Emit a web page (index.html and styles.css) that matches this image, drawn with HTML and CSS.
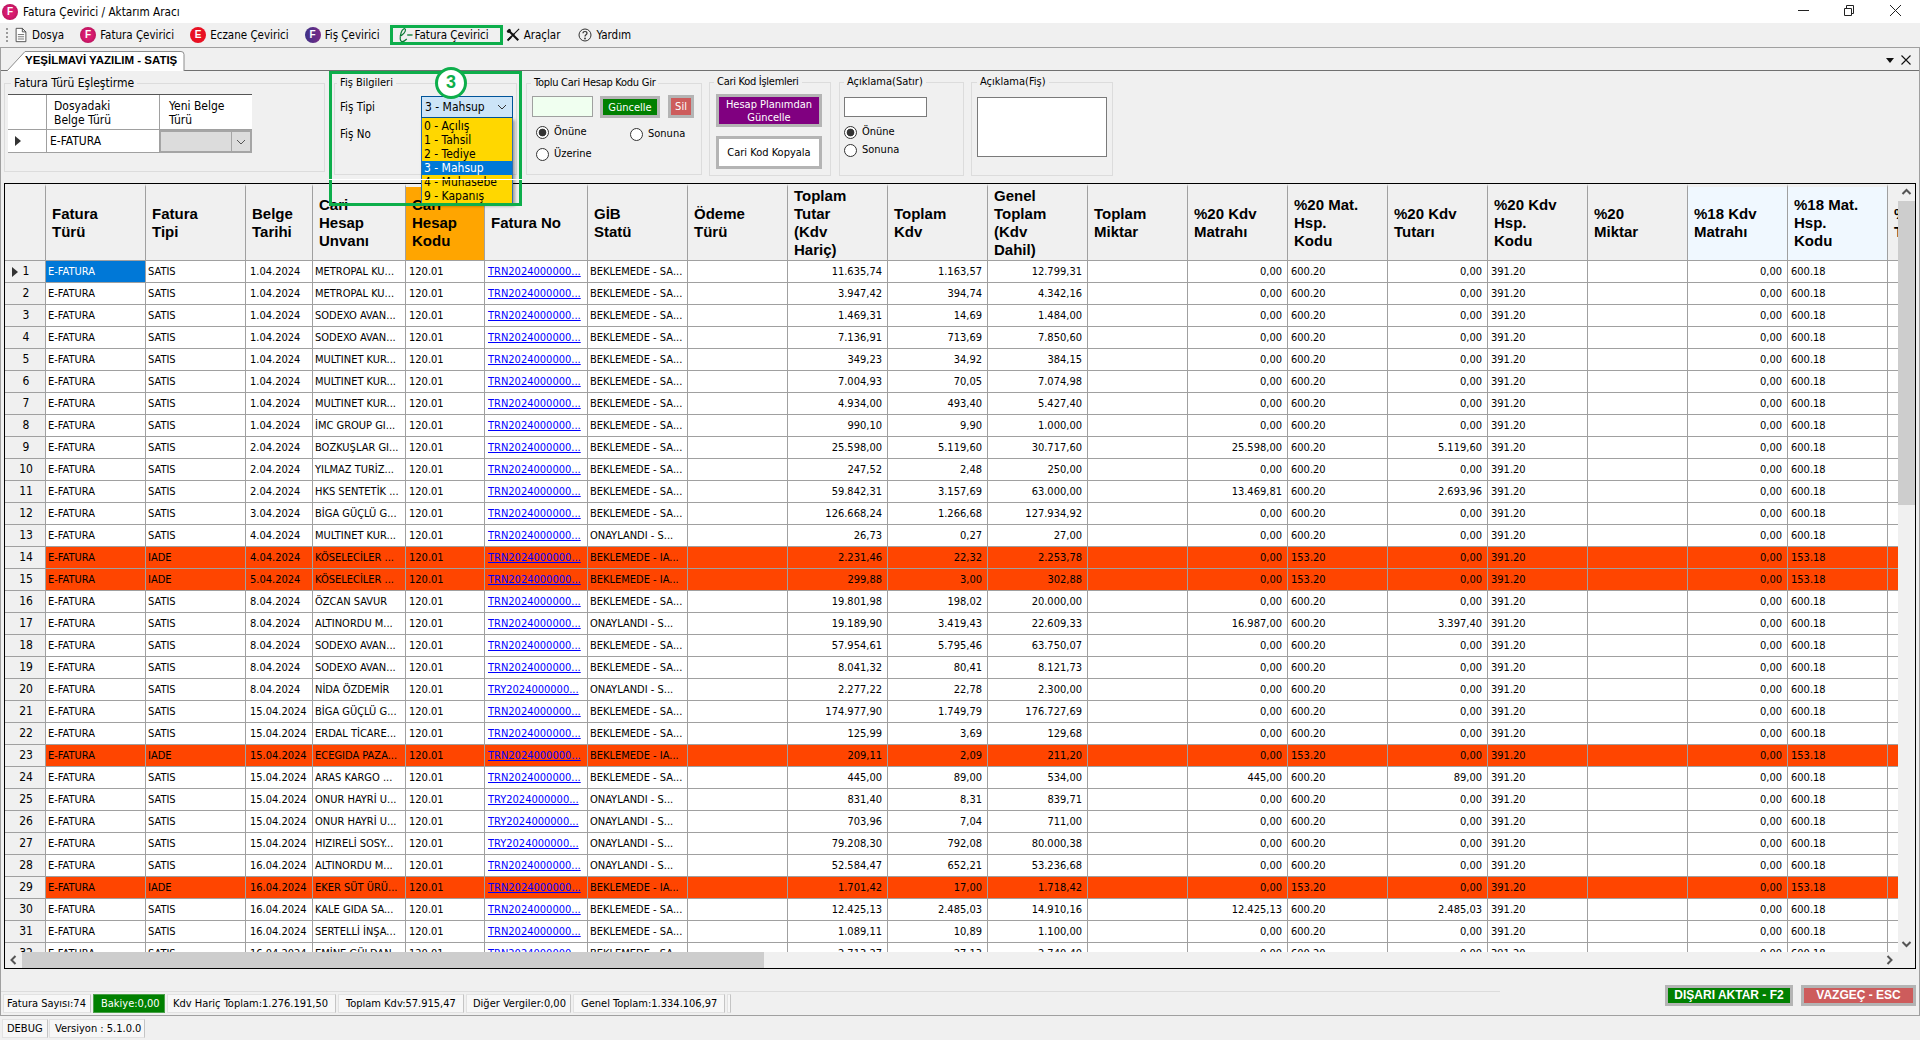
FILE: index.html
```html
<!DOCTYPE html>
<html lang="tr">
<head>
<meta charset="utf-8">
<title>Fatura Çevirici / Aktarım Aracı</title>
<link rel="stylesheet" href="styles.css">
</head>
<body>
<div class="app">
  <header class="titlebar">
    <span class="badge badge-f badge-title">F</span>
    <span class="title-text">Fatura Çevirici / Aktarım Aracı</span>
    <div class="winbtns">
      <svg class="winbtn" viewBox="0 0 46 23"><path d="M18 10.5h11" stroke="#222" fill="none"/></svg>
      <svg class="winbtn" viewBox="0 0 46 23"><path d="M18.5 8.5h7v7h-7zM20.5 8V5.5h7v8H26" stroke="#222" fill="none"/></svg>
      <svg class="winbtn" viewBox="0 0 46 23"><path d="M18 5l11 11M29 5L18 16" stroke="#222" fill="none"/></svg>
    </div>
  </header>

  <nav class="menubar">
    <span class="grip"></span>
    <a class="menu-item menu-first">
      <svg class="micon" viewBox="0 0 14 18"><path d="M1.5 1.5h7l4 4v11h-11zM8.5 1.5v4h4" fill="#fff" stroke="#444"/><path d="M3.5 8.5h7M3.5 11h7M3.5 13.500h7" stroke="#666" fill="none"/></svg>
      Dosya
    </a>
    <a class="menu-item"><span class="badge badge-f">F</span>Fatura Çevirici</a>
    <a class="menu-item"><span class="badge badge-e">E</span>Eczane Çevirici</a>
    <a class="menu-item"><span class="badge badge-p">F</span>Fiş Çevirici</a>
    <a class="menu-item menu-active">
      <svg class="eicon" viewBox="0 0 18 18"><path d="M3 10.500C7 9 10 5 9.500 2.800C9 .8 6 2 4.600 6.500C3.300 11 2.800 16.500 6 16.500C8 16.500 9.500 15 11 13.500" fill="none" stroke="#0b7a35" stroke-width="1.300"/><path d="M11.500 9h6" stroke="#0b7a35" stroke-width="1.500"/></svg>
      Fatura Çevirici
    </a>
    <a class="menu-item menu-tools">
      <svg class="micon" viewBox="0 0 16 16"><path d="M3.500 3.500L14 14" stroke="#111" stroke-width="2.400"/><path d="M.8 3.400L3.400.8l1.700.6.600 2-2.300 2.300-2-.6z" fill="#111"/><path d="M15 1L9 7" stroke="#111" stroke-width="1.300"/><path d="M9.500 6.500L3 13" stroke="#111" stroke-width="1.800"/><path d="M5 9.500L1 13.500l1.500 1.500 4-4z" fill="#111"/></svg>
      Araçlar
    </a>
    <a class="menu-item menu-help">
      <svg class="micon" viewBox="0 0 14 14"><circle cx="7" cy="7" r="6" fill="none" stroke="#333"/><path d="M5 5.300C5 2.900 9 2.900 9 5.300C9 6.900 7 6.800 7 8.500" fill="none" stroke="#333" stroke-width="1.200"/><circle cx="7" cy="10.500" r=".9" fill="#333"/></svg>
      Yardım
    </a>
  </nav>

  <main class="panel">
    <div class="tabstrip">
      <div class="tab">
        <svg class="tab-shape" viewBox="0 0 178 20" preserveAspectRatio="none"><path d="M0 20L18 .5H174Q177 .5 177 3.500V20" fill="#fff" stroke="#8c8c8c"/></svg>
        <span class="tab-label">YEŞİLMAVİ YAZILIM - SATIŞ</span>
      </div>
      <div class="tab-tools">
        <span class="tab-arrow"></span>
        <svg class="tab-close" viewBox="0 0 10 10"><path d="M.5.5l9 9M9.500.5l-9 9" stroke="#111" stroke-width="1.100" fill="none"/></svg>
      </div>
    </div>

    <section class="toparea">
      <fieldset class="group g-map">
        <legend>Fatura Türü Eşleştirme</legend>
        <div class="mini">
          <div class="mini-cell mini-rh"></div>
          <div class="mini-cell mini-h mini-c1">Dosyadaki<br>Belge Türü</div>
          <div class="mini-cell mini-h mini-c2">Yeni Belge<br>Türü</div>
          <div class="mini-cell mini-rh mini-row"><span class="tri"></span></div>
          <div class="mini-cell mini-row mini-c1 mini-val">E-FATURA</div>
          <div class="mini-cell mini-row mini-combo">
            <span class="mini-combo-box"></span>
            <svg class="chev" viewBox="0 0 10 6"><path d="M1 1l4 4 4-4" fill="none" stroke="#555"/></svg>
          </div>
        </div>
      </fieldset>

      <fieldset class="group g-fis">
        <legend>Fiş Bilgileri</legend>
        <div class="form-grid">
          <label>Fiş Tipi</label>
          <div class="combo"><span>3 - Mahsup</span><svg class="chev" viewBox="0 0 10 6"><path d="M1 1l4 4 4-4" fill="none" stroke="#333"/></svg></div>
          <label>Fiş No</label>
          <input class="field field-no" type="text">
        </div>
      </fieldset>

      <fieldset class="group g-toplu">
        <legend>Toplu Cari Hesap Kodu Gir</legend>
        <div class="toplu-row">
          <input class="field field-mint" type="text">
          <button class="btn btn-green btn-guncelle">Güncelle</button>
          <button class="btn btn-red btn-sil">Sil</button>
        </div>
        <div class="radio-grid">
          <label class="radio-line"><input class="radio" type="radio" name="a" checked>Önüne</label>
          <label class="radio-line radio-low"><input class="radio" type="radio" name="a">Sonuna</label>
          <label class="radio-line"><input class="radio" type="radio" name="a">Üzerine</label>
        </div>
      </fieldset>

      <fieldset class="group g-cari group-high">
        <legend>Cari Kod İşlemleri</legend>
        <button class="btn btn-purple btn-tall">Hesap Planımdan<br>Güncelle</button>
        <button class="btn btn-white btn-tall">Cari Kod Kopyala</button>
      </fieldset>

      <fieldset class="group g-satir group-high">
        <legend>Açıklama(Satır)</legend>
        <input class="field field-satir" type="text">
        <div class="radio-stack">
          <label class="radio-line"><input class="radio" type="radio" name="b" checked>Önüne</label>
          <label class="radio-line"><input class="radio" type="radio" name="b">Sonuna</label>
        </div>
      </fieldset>

      <fieldset class="group g-fisnot group-high">
        <legend>Açıklama(Fiş)</legend>
        <textarea class="field field-note"></textarea>
      </fieldset>
    </section>

    <section class="grid">
      <div class="grid-main">
        <div class="table-wrap">
          <table class="data">
            <colgroup id="cols"></colgroup>
            <thead>
              <tr>
                <th></th>
                <th>Fatura<br>Türü</th>
                <th>Fatura<br>Tipi</th>
                <th>Belge<br>Tarihi</th>
                <th>Cari<br>Hesap<br>Unvanı</th>
                <th class="th-orange">Cari<br>Hesap<br>Kodu</th>
                <th>Fatura No</th>
                <th>GİB<br>Statü</th>
                <th>Ödeme<br>Türü</th>
                <th>Toplam<br>Tutar<br>(Kdv<br>Hariç)</th>
                <th>Toplam<br>Kdv</th>
                <th>Genel<br>Toplam<br>(Kdv<br>Dahil)</th>
                <th>Toplam<br>Miktar</th>
                <th>%20 Kdv<br>Matrahı</th>
                <th>%20 Mat.<br>Hsp.<br>Kodu</th>
                <th>%20 Kdv<br>Tutarı</th>
                <th>%20 Kdv<br>Hsp.<br>Kodu</th>
                <th>%20<br>Miktar</th>
                <th class="th-blue">%18 Kdv<br>Matrahı</th>
                <th class="th-blue">%18 Mat.<br>Hsp.<br>Kodu</th>
                <th>%18 Kdv<br>Tutarı</th>
              </tr>
            </thead>
            <tbody id="rows"></tbody>
          </table>
        </div>
        <div class="vscroll">
          <svg class="arrow" viewBox="0 0 17 17"><path d="M4.500 10l4-4 4 4" fill="none" stroke="#555" stroke-width="2"/></svg>
          <div class="vtrack"><div class="vthumb"></div></div>
          <svg class="arrow" viewBox="0 0 17 17"><path d="M4.500 7l4 4 4-4" fill="none" stroke="#555" stroke-width="2"/></svg>
        </div>
      </div>
      <div class="hscroll">
        <svg class="arrow" viewBox="0 0 17 16"><path d="M10.500 4l-4 4 4 4" fill="none" stroke="#555" stroke-width="2"/></svg>
        <div class="htrack"><div class="hthumb"></div></div>
        <svg class="arrow" viewBox="0 0 17 16"><path d="M6.500 4l4 4-4 4" fill="none" stroke="#555" stroke-width="2"/></svg>
      </div>
    </section>

    <footer class="footer">
      <div class="statusbar">
        <span class="st st-count">Fatura Sayısı:74</span>
        <span class="st st-green">Bakiye:0,00</span>
        <span class="st st-kdvh">Kdv Hariç Toplam:1.276.191,50</span>
        <span class="st st-kdv">Toplam Kdv:57.915,47</span>
        <span class="st st-diger">Diğer Vergiler:0,00</span>
        <span class="st st-genel">Genel Toplam:1.334.106,97</span>
        <span class="st st-empty"></span>
      </div>
      <div class="actions">
        <button class="btn btn-action btn-green btn-export">DIŞARI AKTAR - F2</button>
        <button class="btn btn-action btn-red btn-cancel">VAZGEÇ - ESC</button>
      </div>
    </footer>
  </main>

  <div class="bottombar">
    <span class="st st-debug">DEBUG</span>
    <span class="st st-version">Versiyon : 5.1.0.0</span>
  </div>

  <div class="dropdown">
    <div class="dd-item">0 - Açılış</div>
    <div class="dd-item">1 - Tahsil</div>
    <div class="dd-item">2 - Tediye</div>
    <div class="dd-item dd-selected">3 - Mahsup</div>
    <div class="dd-item">4 - Muhasebe</div>
    <div class="dd-item">9 - Kapanış</div>
  </div>
  <div class="callout">
    <span class="callout-num">3</span>
  </div>
</div>
<script src="app.js"></script>
</body>
</html>
```
FILE: styles.css
```css
* { box-sizing: border-box; }
html, body { margin: 0; height: 100%; }
body {
  width: 1920px; height: 1040px; overflow: hidden;
  background: #f0f0f0; color: #000;
  font-family: "DejaVu Sans Condensed", "DejaVu Sans", sans-serif;
  font-stretch: condensed; font-size: 11px; line-height: 14px;
}
.app { position: relative; width: 1920px; height: 1040px; display: flex; flex-direction: column; }

/* title bar */
.titlebar { height: 23px; background: #fff; display: flex; align-items: center; padding-left: 2px; flex: none; }
.title-text { margin-left: 5px; font-size: 11.700px; }
.winbtns { margin-left: auto; display: flex; margin-right: 2px; }
.winbtn { width: 46px; height: 23px; display: block; }

.badge {
  width: 16px; height: 16px; border-radius: 50%; color: #fff;
  font: bold 10px/16px "Liberation Sans", sans-serif; text-align: center; flex: none;
}
.badge-f { background: radial-gradient(circle at 50% 50%, #d81b70 40%, #a5104f 100%); }
.badge-e { background: #e81123; }
.badge-p { background: linear-gradient(90deg, #3d3287, #7a2a86); }

/* menu */
.menubar { height: 24px; flex: none; display: flex; align-items: center; padding-left: 6px; font-size: 11.500px; }
.grip { width: 2px; height: 14px; background: repeating-linear-gradient(#9a9a9a 0 2px, transparent 2px 4px); }
.menu-item { display: flex; align-items: center; gap: 4px; margin-left: 16px; white-space: nowrap; }
.menu-first { margin-left: 6px; }
.micon { width: 14px; height: 16px; flex: none; }
.eicon { width: 18px; height: 16px; flex: none; }
.menu-active { border: 3px solid #0dae4b; height: 20px; padding: 0 11px 0 3px; margin-left: 10px; gap: 1px; }
.menu-tools { margin-left: 3px; }
.menu-help { margin-left: 18px; }

/* panel */
.panel { height: 969px; flex: none; border: 1px solid #a0a0a0; display: flex; flex-direction: column; }
.tabstrip { height: 23px; flex: none; border-bottom: 1px solid #707070; display: flex; align-items: flex-end; padding-left: 6px; }
.tab { position: relative; width: 178px; height: 20px; margin-bottom: -1px; }
.tab-shape { position: absolute; inset: 0; width: 100%; height: 100%; }
.tab-label {
  position: relative; display: block; padding-left: 18px; line-height: 19px;
  font: bold 11.500px/19px "Liberation Sans", sans-serif; white-space: nowrap;
}
.tab-tools { margin-left: auto; display: flex; align-items: center; gap: 7px; padding: 0 8px 5px 0; }
.tab-arrow { width: 0; height: 0; border: 4px solid transparent; border-top: 5px solid #111; border-bottom: 0; }
.tab-close { width: 10px; height: 10px; }

/* top forms */
.toparea { height: 112px; flex: none; display: flex; align-items: flex-start; padding: 5px 0 0 3px; }
.group { margin: 0; border: 1px solid #dcdcdc; min-width: 0; flex: none; }
.group legend { padding: 0 3px; font-size: 11px; line-height: 14px; white-space: nowrap; }
.group-high { margin-top: -1px; height: 101px; }
.g-map { width: 321px; height: 96px; padding: 4px 0 0 3px; }
.g-map legend { margin-left: 3px; font-size: 12px; }
.g-fis { width: 183px; height: 99px; margin-left: 9px; padding: 6px 0 0 5px; }
.g-fis legend { margin-left: -3px; }
.g-toplu { width: 176px; height: 99px; margin-left: 9px; padding: 6px 0 0 5px; }
.g-toplu legend { margin-left: -1px; letter-spacing: -.26px; }
.g-cari { width: 122px; margin-left: 7px; padding: 5px 0 0 6px; display: flex; flex-direction: column; }
.g-cari legend { margin-left: -2px; letter-spacing: -.28px; }
.g-satir { width: 125px; margin-left: 8px; padding: 8px 0 0 4px; }
.g-fisnot { width: 142px; margin-left: 7px; padding: 8px 0 0 5px; }

.mini {
  display: grid; grid-template-columns: 39px 113px 92px; grid-template-rows: 35px 23px;
  width: 244px; border-top: 1px solid #555;
}
.mini-cell { background: #fff; line-height: 14px; }
.mini-rh { border-right: 1px solid #a0a0a0; border-bottom: 1px solid #a0a0a0; display: flex; align-items: center; }
.mini-h { padding: 4px 0 0 7px; border-bottom: 1px solid #a0a0a0; font-size: 12px; }
.mini-c1 { border-right: 1px solid #a0a0a0; }
.mini-c2 { padding-left: 9px; }
.mini-row { border-bottom: 1px solid #a0a0a0; }
.mini-val { padding: 4px 0 0 3px; font-size: 12px; }
.mini-combo { display: flex; align-items: center; background: #dcdcdc; border: 2px solid #a5a5a5; border-left-width: 1px; }
.mini-combo-box { flex: 1; height: 100%; border-right: 1px solid #a5a5a5; }
.mini-combo .chev { margin: 0 4px; }
.tri { width: 0; height: 0; margin-left: 7px; border: 5px solid transparent; border-left: 6px solid #333; border-right: 0; }

.form-grid { display: grid; grid-template-columns: 81px 92px; grid-auto-rows: 22px; row-gap: 5px; align-items: center; font-size: 11.500px; }
.combo {
  height: 22px; display: flex; align-items: center; justify-content: space-between;
  padding: 0 5px 0 3px; background: #cce4f7; border: 1px solid #005499; font-size: 12px;
}
.chev { width: 10px; height: 6px; flex: none; }
.field { display: block; margin: 0; padding: 0; background: #fff; border: 1px solid #7a7a7a; border-radius: 0; resize: none; }
.field-no { width: 92px; height: 22px; visibility: hidden; }
.field-mint { width: 61px; height: 21px; background: #f0fff0; border-color: #a0a0a0; }
.field-satir { width: 83px; height: 20px; }
.field-note { width: 130px; height: 60px; }

.toplu-row { display: flex; align-items: flex-start; }
.btn {
  display: block; margin: 0; padding: 0; border: 3px solid #b4b4b4; color: #fff; text-align: center;
  font-family: "DejaVu Sans Condensed", "DejaVu Sans", sans-serif; font-stretch: condensed;
  font-size: 11px; line-height: 13px; border-radius: 0; white-space: nowrap;
}
.btn-green { background: #008000; }
.btn-red { background: #cd5c5c; }
.btn-purple { background: #800080; }
.btn-white { background: #fff; color: #000; }
.btn-guncelle { width: 60px; height: 22px; margin-left: 7px; }
.btn-sil { width: 26px; height: 23px; margin: -1px 0 0 8px; }
.btn-tall { width: 106px; height: 33px; }
.btn-white { margin-top: 9px; }

.radio-grid { display: grid; grid-template-columns: 94px auto; row-gap: 8px; margin-top: 7px; padding-left: 4px; }
.radio-stack { display: flex; flex-direction: column; gap: 4px; margin-top: 8px; }
.radio-line { display: flex; align-items: center; gap: 5px; height: 14px; }
.radio-low { position: relative; top: 2px; }
.radio {
  appearance: none; width: 13px; height: 13px; margin: 0; flex: none;
  border: 1px solid #333; border-radius: 50%; background: #fff;
}
.radio:checked { background: radial-gradient(circle, #333 0 3.500px, #fff 4.200px); }

/* data grid */
.grid { height: 786px; margin: 0 3px; border: 1px solid #000; display: flex; flex-direction: column; flex: none; }
.grid-main { flex: 1; min-height: 0; display: flex; }
.table-wrap { flex: 1; min-width: 0; overflow: hidden; background: #fff; }
.data { table-layout: fixed; width: 1960px; border-collapse: separate; border-spacing: 0; }
.col { width: 100px; }
.col-head { width: 41px; }
.col-date { width: 67px; }
.col-name { width: 93px; }
.col-code { width: 79px; }
.col-no { width: 103px; }
.data th {
  height: 77px; padding: 0 0 1px 6px; text-align: left; vertical-align: middle;
  background: #f0f0f0; background-clip: padding-box;
  border-top: 3px solid #f0f0f0; border-right: 1px solid #a0a0a0; border-bottom: 1px solid #a0a0a0;
  font: bold 15px/18px "Liberation Sans", sans-serif;
  white-space: nowrap; overflow: hidden;
}
.data .th-orange { background-color: #ffa500; }
.data .th-blue { background-color: #f0f8ff; }
.data td {
  height: 22px; padding: 0 3px 0 2px; line-height: 21px; white-space: nowrap; overflow: hidden;
  border-right: 1px solid #a0a0a0; border-bottom: 1px solid #a0a0a0;
}
.data td.rh { position: relative; background: #f0f0f0; text-align: center; padding-left: 5px; font-size: 12px; }
.data td.rh .tri { position: absolute; left: 0; top: 6px; }
.data td.num { text-align: right; padding-right: 5px; }
.data td.pad { padding-left: 3px; }
.data td.date { padding-left: 4px; }
.data a { color: #00f; text-decoration: underline; }
.data tr.iade td:not(.rh) { background: #ff4500; }
.data td.sel { background: #0078d7; color: #fff; }

.vscroll { width: 17px; flex: none; display: flex; flex-direction: column; }
.arrow { display: block; width: 17px; height: 17px; flex: none; }
.vtrack { flex: 1; }
.vthumb { height: 304px; background: #cdcdcd; }
.hscroll { height: 16px; flex: none; display: flex; padding-right: 17px; }
.hscroll .arrow { height: 16px; }
.htrack { flex: 1; padding-right: 1117px; }
.hthumb { height: 100%; background: #cdcdcd; }

/* footer */
.footer { flex: 1; display: flex; justify-content: space-between; align-items: flex-start; }
.statusbar {
  width: 1499px; margin-top: 22px; padding: 2px 0 0 2px; height: 22px;
  border-top: 1px solid #dcdcdc; display: flex; gap: 2px;
}
.st {
  display: block; height: 19px; line-height: 17px; padding: 0 0 0 5px; white-space: nowrap;
  background: #f7f7f7; border: 1px solid #e2e2e2; border-right-color: #c4c4c4;
}
.st-count { width: 88px; padding-left: 3px; }
.st-green { width: 72px; padding-left: 7px; background: #008000; color: #fff; border-color: #4aa04a; }
.st-kdvh { width: 169px; }
.st-kdv { width: 126px; padding-left: 7px; }
.st-diger { width: 105px; padding-left: 6px; }
.st-genel { width: 152px; padding-left: 7px; }
.st-empty { width: 4px; padding: 0; }
.actions { display: flex; gap: 8px; margin: 16px 3px 0 0; }
.btn-action { height: 21px; font: bold 12px/15px "Liberation Sans", sans-serif; }
.btn-export { width: 128px; }
.btn-cancel { width: 115px; }

.bottombar { flex: 1; display: flex; align-items: center; padding: 0 0 0 2px; gap: 1px; }
.st-debug { width: 46px; padding-left: 4px; }
.st-version { width: 96px; }

/* overlays */
.dropdown {
  position: absolute; left: 421px; top: 118px; width: 92px; height: 86px; padding-top: 1px;
  background: #ffd700; border: 1px solid #2f6fb0; border-top: 0; box-shadow: 2px 2px 3px rgba(0,0,0,.35);
  font-size: 12px;
}
.dd-item { height: 14px; line-height: 14px; padding-left: 2px; }
.dd-selected { background: #0078d7; color: #fff; }
.callout { position: absolute; left: 329px; top: 71px; width: 193px; height: 135px; border: 3px solid #0dae4b; }
.callout::after { content: ""; position: absolute; left: -3px; right: -3px; top: 105px; height: 1px; background: #fff; }
.callout-num {
  position: absolute; left: 103px; top: -7px; width: 32px; height: 32px; border-radius: 50%;
  background: #fff; border: 3.500px solid #0dae4b; color: #0dae4b; text-align: center;
  font: bold 18px/25px "Liberation Sans", sans-serif;
}
```
FILE: app.js
```js
var S = "BEKLEMEDE - SA...", O = "ONAYLANDI - S...", I = "BEKLEMEDE - IA...";
var data = [
  ["1.04.2024","METROPAL KU...","TRN",S,"11.635,74","1.163,57","12.799,31"],
  ["1.04.2024","METROPAL KU...","TRN",S,"3.947,42","394,74","4.342,16"],
  ["1.04.2024","SODEXO AVAN...","TRN",S,"1.469,31","14,69","1.484,00"],
  ["1.04.2024","SODEXO AVAN...","TRN",S,"7.136,91","713,69","7.850,60"],
  ["1.04.2024","MULTINET KUR...","TRN",S,"349,23","34,92","384,15"],
  ["1.04.2024","MULTINET KUR...","TRN",S,"7.004,93","70,05","7.074,98"],
  ["1.04.2024","MULTINET KUR...","TRN",S,"4.934,00","493,40","5.427,40"],
  ["1.04.2024","İMC GROUP GI...","TRN",S,"990,10","9,90","1.000,00"],
  ["2.04.2024","BOZKUŞLAR GI...","TRN",S,"25.598,00","5.119,60","30.717,60","25.598,00","5.119,60"],
  ["2.04.2024","YILMAZ TURİZ...","TRN",S,"247,52","2,48","250,00"],
  ["2.04.2024","HKS SENTETİK ...","TRN",S,"59.842,31","3.157,69","63.000,00","13.469,81","2.693,96"],
  ["3.04.2024","BİGA GÜÇLÜ G...","TRN",S,"126.668,24","1.266,68","127.934,92"],
  ["4.04.2024","MULTINET KUR...","TRN",O,"26,73","0,27","27,00"],
  ["4.04.2024","KÖSELECİLER ...","TRN",I,"2.231,46","22,32","2.253,78"],
  ["5.04.2024","KÖSELECİLER ...","TRN",I,"299,88","3,00","302,88"],
  ["8.04.2024","ÖZCAN SAVUR","TRN",S,"19.801,98","198,02","20.000,00"],
  ["8.04.2024","ALTINORDU M...","TRN",O,"19.189,90","3.419,43","22.609,33","16.987,00","3.397,40"],
  ["8.04.2024","SODEXO AVAN...","TRN",S,"57.954,61","5.795,46","63.750,07"],
  ["8.04.2024","SODEXO AVAN...","TRN",S,"8.041,32","80,41","8.121,73"],
  ["8.04.2024","NİDA ÖZDEMİR","TRY",O,"2.277,22","22,78","2.300,00"],
  ["15.04.2024","BİGA GÜÇLÜ G...","TRN",S,"174.977,90","1.749,79","176.727,69"],
  ["15.04.2024","ERDAL TİCARE...","TRN",S,"125,99","3,69","129,68"],
  ["15.04.2024","ECEGIDA PAZA...","TRN",I,"209,11","2,09","211,20"],
  ["15.04.2024","ARAS KARGO ...","TRN",S,"445,00","89,00","534,00","445,00","89,00"],
  ["15.04.2024","ONUR HAYRİ U...","TRY",O,"831,40","8,31","839,71"],
  ["15.04.2024","ONUR HAYRİ U...","TRY",O,"703,96","7,04","711,00"],
  ["15.04.2024","HIZIRELİ SOSY...","TRY",O,"79.208,30","792,08","80.000,38"],
  ["16.04.2024","ALTINORDU M...","TRN",O,"52.584,47","652,21","53.236,68"],
  ["16.04.2024","EKER SÜT ÜRÜ...","TRN",I,"1.701,42","17,00","1.718,42"],
  ["16.04.2024","KALE GIDA SA...","TRN",S,"12.425,13","2.485,03","14.910,16","12.425,13","2.485,03"],
  ["16.04.2024","SERTELLİ İNŞA...","TRN",S,"1.089,11","10,89","1.100,00"],
  ["16.04.2024","EMİNE GÜLDAN","TRN",S,"2.713,27","27,13","2.740,40"]
];

var colClasses = ["col-head","col","col","col-date","col-name","col-code","col-no"];
var colgroup = document.getElementById("cols");
for (var c = 0; c < 21; c++) {
  var col = document.createElement("col");
  col.className = colClasses[c] || "col";
  colgroup.appendChild(col);
}

function cell(cls, text) {
  return '<td' + (cls ? ' class="' + cls + '"' : '') + '>' + (text || '') + '</td>';
}

var html = data.map(function (d, i) {
  var iade = d[3] === I;
  var m20 = d[7] || "0,00", t20 = d[8] || "0,00";
  return '<tr' + (iade ? ' class="iade"' : '') + '>' +
    '<td class="rh">' + (i === 0 ? '<span class="tri"></span>' : '') + (i + 1) + '</td>' +
    cell(i === 0 ? "sel" : "", "E-FATURA") +
    cell("", iade ? "IADE" : "SATIS") +
    cell("date", d[0]) +
    cell("", d[1]) +
    cell("pad", "120.01") +
    cell("pad", '<a>' + d[2] + '2024000000...</a>') +
    cell("", d[3]) +
    cell("", "") +
    cell("num", d[4]) + cell("num", d[5]) + cell("num", d[6]) +
    cell("", "") +
    cell("num", m20) + cell("pad", iade ? "153.20" : "600.20") +
    cell("num", t20) + cell("pad", "391.20") +
    cell("", "") +
    cell("num", "0,00") + cell("pad", iade ? "153.18" : "600.18") +
    cell("num", "0,00") +
    '</tr>';
}).join("");
document.getElementById("rows").innerHTML = html;
```
